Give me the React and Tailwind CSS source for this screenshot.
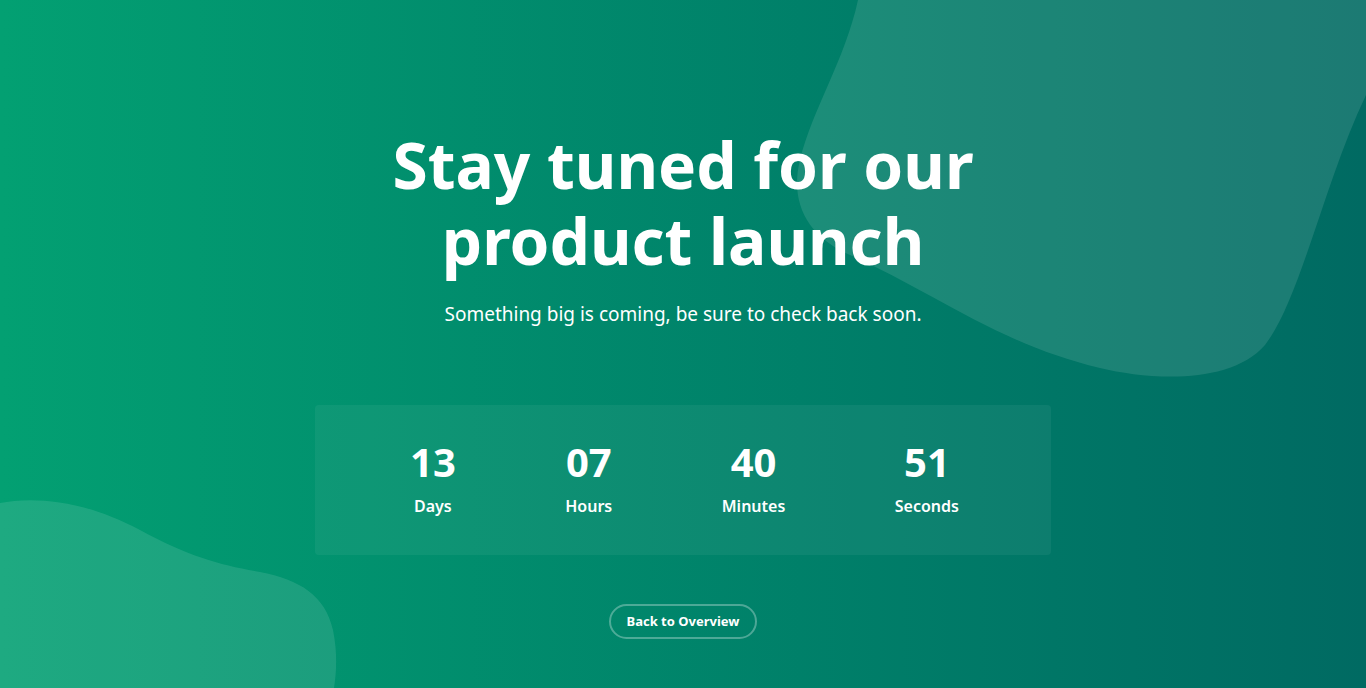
const units = [
  { value: "13", label: "Days" },
  { value: "07", label: "Hours" },
  { value: "40", label: "Minutes" },
  { value: "51", label: "Seconds" },
];

const Blobs = () => (
  <svg
    className="absolute inset-0 w-full h-full pointer-events-none"
    viewBox="0 0 1366 688"
    preserveAspectRatio="none"
  >
    {/* top right blob */}
    <path
      d="M858 0 H1366 V95 C1325 180 1300 300 1265 345 C1230 385 1150 380 1100 368 C1000 345 930 290 850 255 C805 235 790 200 800 160 C812 110 845 60 858 0 Z"
      fill="white"
      fillOpacity="0.11"
    />
    {/* bottom left blob */}
    <path
      d="M0 503 C30 497 80 498 140 530 C190 557 220 565 260 572 C300 580 325 595 333 630 C338 655 336 675 334 688 L0 688 Z"
      fill="white"
      fillOpacity="0.11"
    />
  </svg>
);

export default function App() {
  return (
    <div
      className="relative w-full h-[688px] overflow-hidden bg-gradient-to-r from-[#03a072] to-[#006a62] text-white"
      style={{ fontFamily: '"Noto Sans", "Open Sans", sans-serif' }}
    >
      <Blobs />

      <main className="relative flex flex-col items-center pt-[127px]">
        {/* Heading */}
        <h1 className="flex flex-col items-center text-[64px] leading-[76px] font-bold text-center">
          <span className="block">Stay tuned for our</span>
          <span className="block">product launch</span>
        </h1>
        <p className="mt-[21px] text-[19px] leading-[28px]">
          Something big is coming, be sure to check back soon.
        </p>

        {/* Countdown */}
        <div className="mt-[77px] w-[736px] h-[150px] rounded-[4px] bg-white/5 flex items-center justify-between pl-[95px] pr-[92px] pb-[6px]">
          {units.map((u) => (
            <div key={u.label} className="flex flex-col items-center">
              <span className="text-[40px] leading-[48px] font-bold">{u.value}</span>
              <span className="mt-[9px] text-[16px] leading-[22px] font-semibold">{u.label}</span>
            </div>
          ))}
        </div>

        {/* Button */}
        <button className="mt-[49px] h-[35px] px-[16px] rounded-full border-2 border-white/30 text-[13px] font-bold">
          Back to Overview
        </button>
      </main>
    </div>
  );
}
